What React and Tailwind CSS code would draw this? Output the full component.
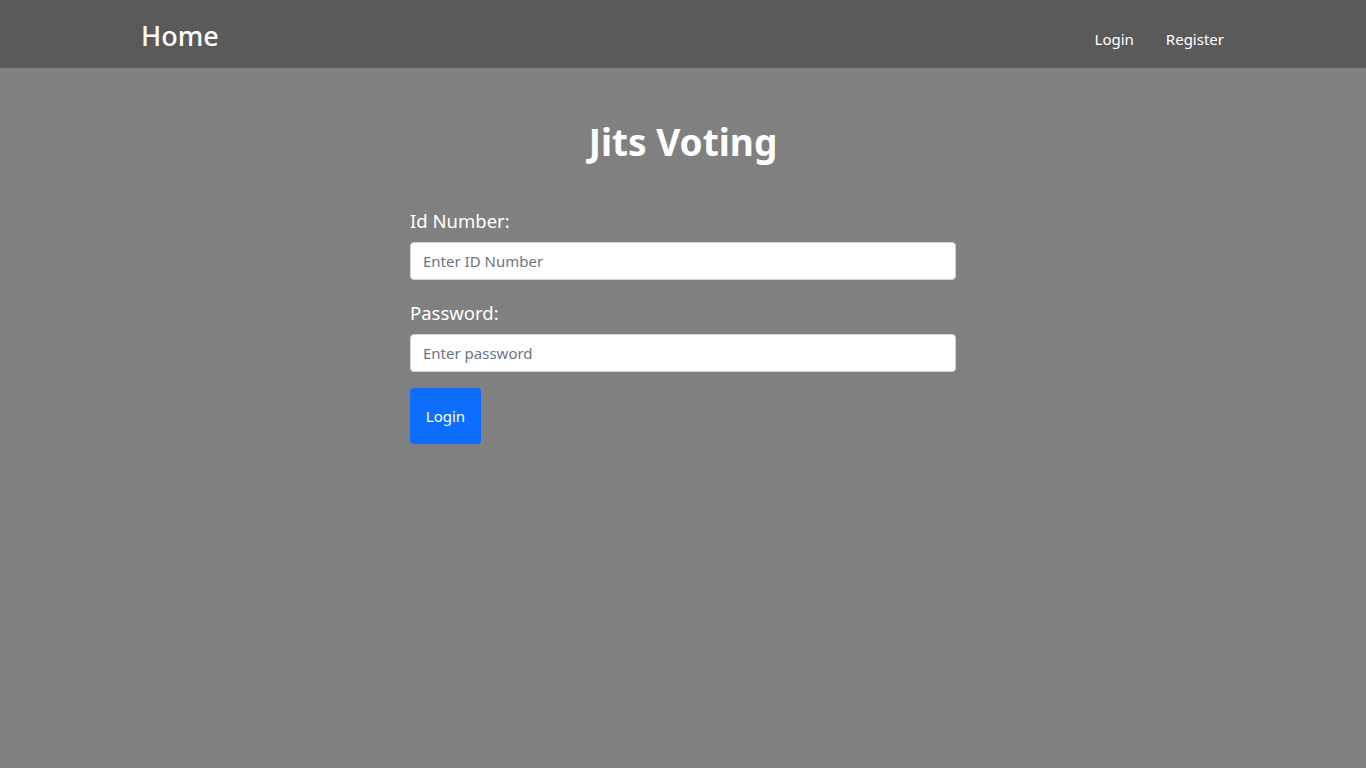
export default function App() {
  return (
    <div className="min-h-[768px] w-full bg-[#808080]" style={{ fontFamily: '"Noto Sans", "Open Sans", sans-serif' }}>
      <nav className="h-[68px] bg-[#5a5a5a] flex items-center justify-between pl-[141px] pr-[142px]">
        <span className="text-white text-[27px] font-medium leading-none mt-[2px]">Home</span>
        <div className="flex items-center gap-[32px] text-white text-[15px] mt-[10px]">
          <span>Login</span>
          <span>Register</span>
        </div>
      </nav>
      <div className="w-[546px] mx-auto pt-[50px]">
        <h1 className="text-white text-[37px] font-bold text-center leading-[48px]">Jits Voting</h1>
        <div className="mt-[41px]">
          <label className="block text-white text-[18.5px] leading-[28px]">Id Number:</label>
          <input className="mt-[7px] block w-full h-[38px] bg-white rounded-[4px] border border-[#ced4da] px-[12px] text-[15px] text-[#212529] placeholder:text-[#6c757d] outline-none" placeholder="Enter ID Number" />
        </div>
        <div className="mt-[19px]">
          <label className="block text-white text-[18.5px] leading-[28px]">Password:</label>
          <input type="password" className="mt-[7px] block w-full h-[38px] bg-white rounded-[4px] border border-[#ced4da] px-[12px] text-[15px] text-[#212529] placeholder:text-[#6c757d] outline-none" placeholder="Enter password" />
        </div>
        <button className="mt-[16px] w-[71px] h-[56px] bg-[#0d6efd] rounded-[4px] text-white text-[15px]">Login</button>
      </div>
    </div>
  );
}
